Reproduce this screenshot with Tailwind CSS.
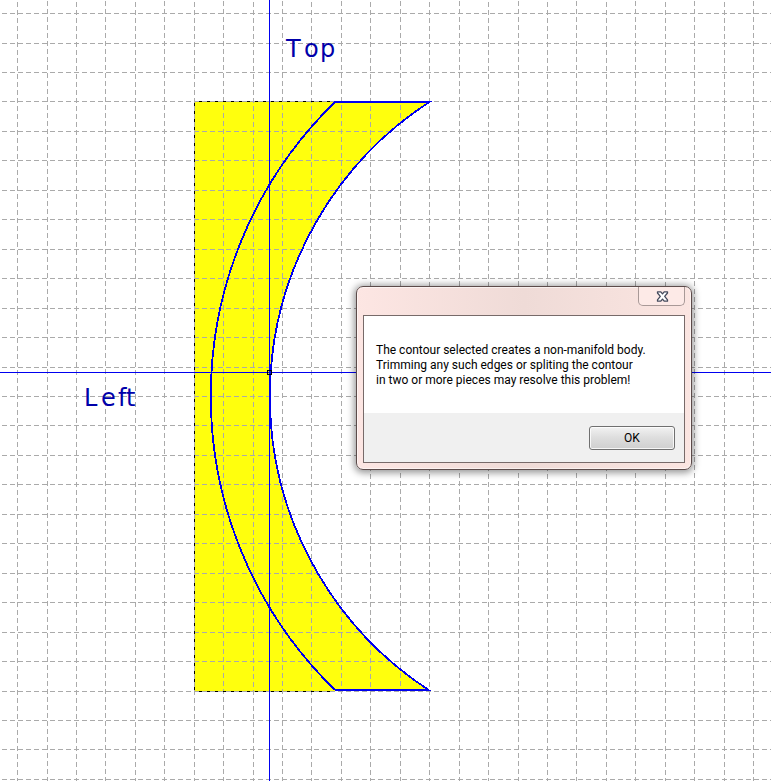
<!DOCTYPE html>
<html lang="en">
<head>
<meta charset="utf-8">
<meta name="viewport" content="width=device-width, initial-scale=1">
<title>Contour sketch</title>
<script src="https://cdn.jsdelivr.net/npm/@tailwindcss/browser@4"></script>
</head>
<body class="bg-white">
<main class="relative h-screen overflow-hidden bg-white">
  <svg class="absolute inset-0 h-full w-full" role="img" aria-label="Sketch view with the selected contour">
    <path d="M194 101H335V102H429A351.3 351.3 0 0 0 429 690H335V691H194Z" fill="#ffff0d"/>
    <g id="grid" stroke="#aaaaaa" stroke-width="1" stroke-dasharray="5 3" shape-rendering="crispEdges"></g>
    <g shape-rendering="crispEdges" fill="none" stroke="#000" stroke-dasharray="3 5">
      <path d="M199 101.5H335"/>
      <path d="M199 691.5H335"/>
      <path d="M194.500 103V691"/>
    </g>
    <path d="M269.500 0V4000" stroke="#0000f0" shape-rendering="crispEdges"/>
    <path d="M0 372.500H4000" stroke="#0000f0" shape-rendering="crispEdges"/>
    <g fill="none" stroke="#0000f0" stroke-width="1.800" shape-rendering="crispEdges">
      <path d="M335 102.200H429A351.300 351.300 0 0 0 429 690.300H335"/>
      <path d="M335 102A410 410 0 0 0 335 690"/>
    </g>
    <rect x="267.500" y="370.500" width="4" height="4" fill="none" stroke="#000" shape-rendering="crispEdges"/>
    <g fill="#0000aa" font-family="'DejaVu Sans', sans-serif" font-size="24">
      <text x="286 304 320" y="57">Top</text>
      <text x="84 101 118 126" y="406">Left</text>
    </g>
  </svg>

  <section role="alertdialog" aria-label="Contour message" aria-describedby="message" class="absolute left-[356px] top-[286px] flex w-[336px] flex-col rounded-[7px] border border-[#5c4b4a] bg-linear-to-r from-[#fde6e3] via-[#efdbd7] to-[#fbe5e1] px-1.5 pb-1.5 shadow-[0_1px_7px_2px_rgba(0,0,0,0.4),inset_0_0_0_1px_rgba(255,255,255,0.55)]">
    <header class="flex h-7 items-start justify-end">
      <button type="button" aria-label="Close" class="flex h-[19px] w-[47px] items-center justify-center rounded-b-[5px] border border-t-0 border-[#a89997] bg-[#fdeae7] pl-px">
        <svg class="h-[11px] w-[13px]" viewBox="0 0 13 11"><path d="M1.500 .8H4.800L6.500 2.900L8.200 .8H11.500V2L8.700 5.400L11.500 8.800V10.200H8.200L6.500 8.100L4.800 10.200H1.500V8.800L4.300 5.400L1.500 2Z" fill="#fff" stroke="#454a5c" stroke-width="1.300" stroke-linejoin="round"/></svg>
      </button>
    </header>
    <div class="border border-[#776a69] bg-white font-[Roboto,sans-serif] text-[12px] text-black">
      <p id="message" class="px-3 pb-[25px] pt-[27px] leading-[15px]">The contour selected creates a non-manifold body.<br>Trimming any such edges or spliting the contour<br>in two or more pieces may resolve this problem!</p>
      <footer class="flex justify-end bg-[#f0f0f0] px-[9px] pb-3 pt-[13px]">
        <button type="button" class="h-6 w-[86px] rounded-[3px] border border-[#707070] bg-linear-to-b from-[#f2f2f2] from-0% via-[#dddddd] via-50% to-[#cfcfcf] shadow-[inset_0_0_0_1px_rgba(255,255,255,0.8)]">OK</button>
      </footer>
    </div>
  </section>
</main>
<script>
  const grid = document.getElementById('grid');
  const line = d => {
    const p = document.createElementNS('http://www.w3.org/2000/svg', 'path');
    p.setAttribute('d', d);
    grid.appendChild(p);
  };
  for (let i = 0, x; (x = Math.floor(17.58 + i * 29.44)) < innerWidth; i++) line(`M${x + 0.5} ${i % 2 ? 1 : 2}V${innerHeight}`);
  for (let i = 0, y; (y = Math.floor(13.55 + i * 29.455)) < innerHeight; i++) line(`M2 ${y + 0.5}H${innerWidth}`);
</script>
</body>
</html>
